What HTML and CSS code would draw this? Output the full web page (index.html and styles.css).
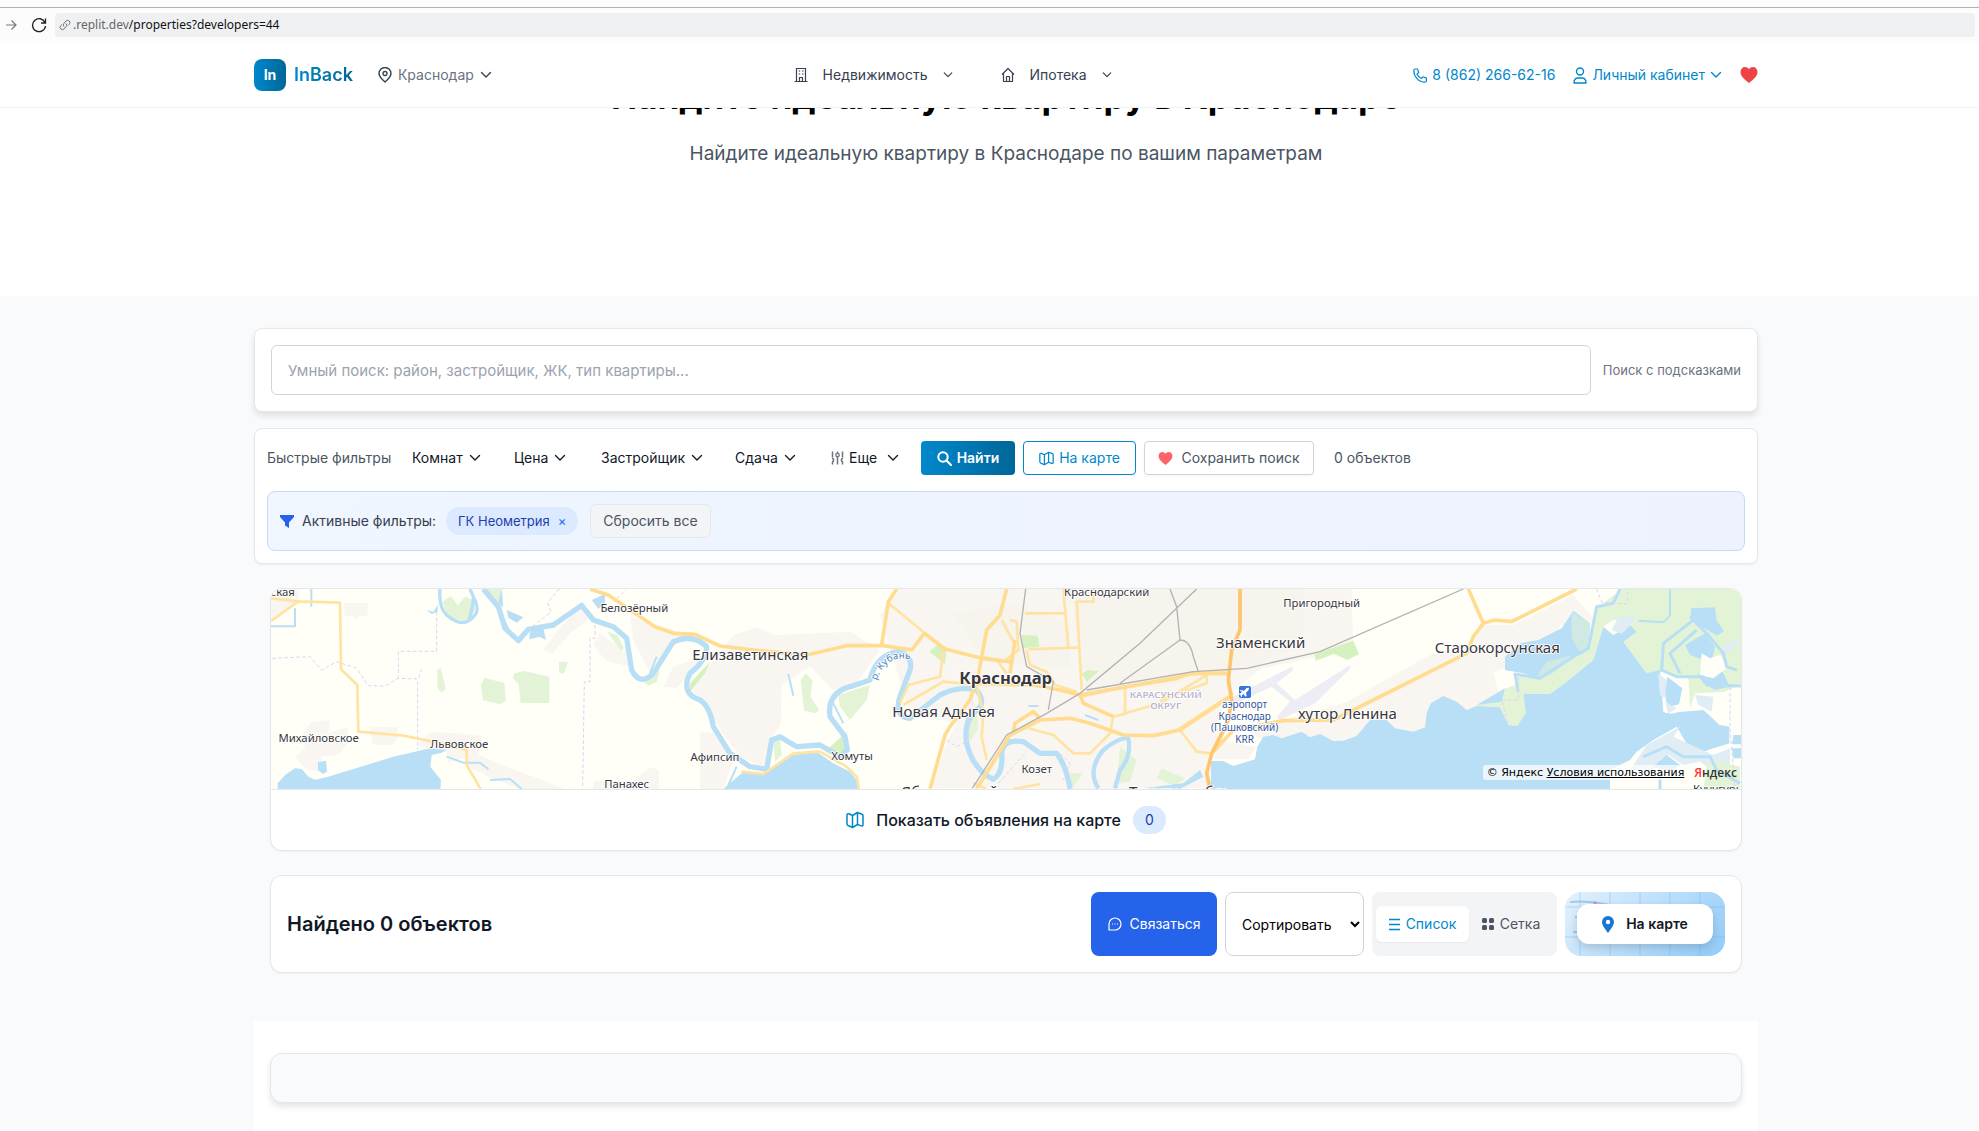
FILE: index.html
```html
<!DOCTYPE html>
<html lang="ru">
<head>
<meta charset="utf-8">
<meta name="viewport" content="width=device-width, initial-scale=1">
<title>InBack — Недвижимость в Краснодаре</title>
<link rel="stylesheet" href="styles.css">
</head>
<body>
<svg class="sprite" aria-hidden="true">
  <symbol id="chevron" viewBox="0 0 12 12"><path d="M1.5 3.5 6 8l4.5-4.5" fill="none" stroke="currentColor" stroke-width="1.4" stroke-linecap="round" stroke-linejoin="round"/></symbol>
  <symbol id="heart" viewBox="0 0 18 16"><path d="M9 16C4 12 .5 9 .5 5 .5 2 2.500 0 5 0c1.700 0 3.200.9 4 2.300C9.800.9 11.300 0 13 0c2.500 0 4.500 2 4.500 5 0 4-3.500 7-8.500 11z" fill="currentColor"/></symbol>
  <symbol id="map" viewBox="0 0 18 18"><path d="M1 4c0-1 .8-1.500 1.700-1.200L6.500 4.500 11.500 1.500l4.500 1.700c.7.300 1 .8 1 1.500v9c0 1-.8 1.500-1.700 1.200L11.500 13.500 6.500 16.500 2 14.500c-.7-.3-1-.8-1-1.500zM6.500 4.500v12M11.500 1.500v12" fill="none" stroke="currentColor" stroke-width="1.500" stroke-linejoin="round"/></symbol>
</svg>

<div class="browser">
  <svg class="browser-icon" width="12" height="12" viewBox="0 0 12 12"><path d="M1 6h10M6.500 1.500 11 6l-4.500 4.500" fill="none" stroke="#777" stroke-width="1.200"/></svg>
  <svg class="browser-icon" width="16" height="16" viewBox="0 0 16 16"><path d="M14 5.500A6.500 6.500 0 1 0 14.500 9M14.500 1.500v4.500H10" fill="none" stroke="#222" stroke-width="1.300"/></svg>
  <div class="address">
    <svg width="12" height="12" viewBox="0 0 12 12"><path d="M5 7.500a2.300 2.300 0 0 1 0-3.200L7 2a2.300 2.300 0 0 1 3.300 3.200L9 6.500M7 4.500a2.300 2.300 0 0 1 0 3.200L5 10a2.300 2.300 0 0 1-3.300-3.200L3 5.500" fill="none" stroke="#777" stroke-width="1"/></svg>
    <span class="address-text"><span class="host">.replit.dev</span>/properties?developers=44</span>
  </div>
</div>

<header class="header">
  <div class="container">
    <div class="header-row">
      <div class="header-left">
        <a class="brand" href="#"><span class="brand-mark">In</span><span class="brand-name">InBack</span></a>
        <button class="link city" type="button">
          <svg width="14" height="16" viewBox="0 0 14 16"><path d="M7 15C3 11.500 1 9 1 6.500a6 6 0 0 1 12 0C13 9 11 11.500 7 15z" fill="none" stroke="currentColor" stroke-width="1.400"/><circle cx="7" cy="6.500" r="2" fill="none" stroke="currentColor" stroke-width="1.300"/></svg>
          Краснодар
          <svg width="12" height="12"><use href="#chevron"/></svg>
        </button>
      </div>
      <nav class="nav">
        <button class="link nav-link" type="button">
          <svg width="14" height="16" viewBox="0 0 14 16"><path d="M2.500 14.500V1.500h9v13M.5 14.500h13M5.500 14.500v-4h3v4M4.700 4h1.500M8 4h1.500M4.700 7h1.500M8 7h1.500" fill="none" stroke="currentColor" stroke-width="1.200"/></svg>
          Недвижимость
          <svg width="10" height="10"><use href="#chevron"/></svg>
        </button>
        <button class="link nav-link" type="button">
          <svg width="14" height="16" viewBox="0 0 14 16"><path d="M1 7.500 7 1.500l6 6M2.500 6.500v8h9v-8M5.500 14.500v-5h3v5" fill="none" stroke="currentColor" stroke-width="1.200" stroke-linejoin="round"/></svg>
          Ипотека
          <svg width="10" height="10"><use href="#chevron"/></svg>
        </button>
      </nav>
      <div class="header-right">
        <a class="accent" href="#">
          <svg width="14" height="15" viewBox="0 0 14 15"><path d="M2 1h2.500l1.200 3.500L4 6.200c1 2 2.300 3.300 4.300 4.300L10 8.800l3.400 1.300v2.600c0 1-.7 1.500-1.600 1.500C5.700 14 .8 8.500.8 2.600.8 1.700 1.200 1 2 1z" fill="none" stroke="currentColor" stroke-width="1.200" stroke-linejoin="round"/></svg>
          8 (862) 266-62-16
        </a>
        <button class="link accent" type="button">
          <svg width="14" height="17" viewBox="0 0 14 17"><circle cx="7" cy="4.500" r="3.500" fill="none" stroke="currentColor" stroke-width="1.400"/><path d="M1 16c0-3.500 2-5 4-5h4c2 0 4 1.500 4 5z" fill="none" stroke="currentColor" stroke-width="1.400" stroke-linejoin="round"/></svg>
          Личный кабинет
          <svg width="12" height="12"><use href="#chevron"/></svg>
        </button>
        <a class="favorite" href="#" aria-label="Избранное"><svg width="18" height="16"><use href="#heart"/></svg></a>
      </div>
    </div>
  </div>
</header>

<section class="hero">
  <div class="container">
    <h1>Найдите идеальную квартиру в Краснодаре</h1>
    <p>Найдите идеальную квартиру в Краснодаре по вашим параметрам</p>
  </div>
</section>

<main class="container main">
  <section class="card search">
    <input class="search-input" type="search" aria-label="Умный поиск" placeholder="Умный поиск: район, застройщик, ЖК, тип квартиры...">
    <span class="search-note">Поиск с подсказками</span>
  </section>

  <section class="card filters">
    <div class="filter-row">
      <span class="filter-title">Быстрые фильтры</span>
      <button class="drop rooms" type="button">Комнат <svg width="12" height="12"><use href="#chevron"/></svg></button>
      <button class="drop price" type="button">Цена <svg width="12" height="12"><use href="#chevron"/></svg></button>
      <button class="drop builder" type="button">Застройщик <svg width="12" height="12"><use href="#chevron"/></svg></button>
      <button class="drop term" type="button">Сдача <svg width="12" height="12"><use href="#chevron"/></svg></button>
      <button class="drop more" type="button">
        <svg width="13" height="14" viewBox="0 0 13 14"><path d="M1.500.5v6M1 7.500c2 0 2.500 3 0 3.500M1.500 11v2.500M6.500.5V2M6.500 6v7.500M11.500.5v6M12 7.500c-2 0-2.500 3 0 3.500M11.500 11v2.500" fill="none" stroke="#6b7280" stroke-width="1.500"/><circle cx="6.500" cy="4" r="1.700" fill="none" stroke="#6b7280" stroke-width="1.300"/></svg>
        Еще <svg class="more-chev" width="12" height="12"><use href="#chevron"/></svg>
      </button>
      <button class="btn btn-find" type="button"><svg width="15" height="15" viewBox="0 0 15 15"><circle cx="6" cy="6" r="4.700" fill="none" stroke="#fff" stroke-width="2"/><path d="m9.500 9.500 4.500 4.500" stroke="#fff" stroke-width="2.200" stroke-linecap="round"/></svg>Найти</button>
      <button class="btn btn-map" type="button"><svg width="15" height="15"><use href="#map"/></svg>На карте</button>
      <button class="btn btn-save" type="button"><svg width="15" height="13"><use href="#heart"/></svg>Сохранить поиск</button>
      <span class="count">0 объектов</span>
    </div>
    <div class="active">
      <svg width="14" height="13" viewBox="0 0 14 13"><path d="M0 0h14v2L9 7.500V13L5 10.500v-3L0 2z" fill="#2563eb"/></svg>
      <span class="active-title">Активные фильтры:</span>
      <span class="chip">ГК Неометрия <button type="button" aria-label="Убрать фильтр">×</button></span>
      <button class="reset" type="button">Сбросить все</button>
    </div>
  </section>

  <section class="card map-card">
    <div class="map">
      <svg class="map-canvas" viewBox="33 57 4410 600" preserveAspectRatio="xMidYMid slice" role="img" aria-label="Карта Краснодара">
        <rect x="33" y="57" width="4410" height="600" fill="#fffff8"/>
        <!-- built-up areas -->
        <g fill="#f9f6f1">
          <path d="M33 57H118V85L60 140 33 155zM253 98h70v40h-28l-5 12-15-12h-22zM155 455l55-5-5 40 60-20v45l-30 40-50 5-10 45-40-10-30-35 30-25-10-40zM330 472h83v30l-15 22h-60zM512 487l80 2 75 10-10 55 90 40 85 30 80 33H780l-100-40-60-30v-25l-55 15-5-30-90-20z"/>
          <path d="M965 103 985 150 935 185 875 252 850 240 890 185zM1020 190l80 60 5 40-70-20-35-45zM1110 140l180 55-60 40-60 75-50-100zM1210 350l30-60 90-30-30 40-50 55zM1320 487h40l60 80-20 60-10 30h-70zM1000 632h120l50-40 27 8v57h-197z"/>
          <path d="M1350 285 1420 195 1490 172 1545 195 1770 185 1860 240 1790 340 1720 360 1650 290 1565 345 1562 465 1530 510 1515 595 1440 560 1380 480 1330 390 1280 350z"/>
          <path d="M1910 57H3275l5 180-280 60-110 90-20 120 120 25-25 35H2853v90H2015l45-140 30-60-140-20-50-170-40-130zM2940 470l190-35 130-40 250-140 130-40 30-50 90 0 180-90 70 80-110 10-30 90-170 50 15 60-105 95-100-5-40 45-190 30-80-10-140 20z"/>
        </g>
        <path d="M2430 57h700v170l-230 90-420 60zM2080 130l170-30 180 60v130l-250-10z" fill="#f6f2eb" opacity=".4"/>
        <!-- parks -->
        <g fill="#e3f4d6">
          <path d="M547 95l25-17 22 28 22-27 25 14 5 30-30 30-50-8zM665 57h60v60l-20-20zM532 298l10-4 15 62-12 12-13-15zM663 345l10-21 60 14 5 55-17 10-52-12zM758 325l5-15 30-7 75 17v79h-86l-6-56zM897 275h27l-12 36-15-3zM1042 185l30 10 20 40-10 8zM1150 335l50-35-10 35-25 12z"/>
          <path d="M1622 330l15-20 20 20-5 50 25 40-10 10-35-8zM1735 375l95-30-10 45-50 60-30-40zM1540 510l20-5 5 50-20 20zM2115 440l35-25 5 60-25 40zM2430 610l40-2-35 49zM2580 530l50 40-20 65-40 5zM2690 625l15-30 70 30-30 22z"/>
          <path d="M4085 57H4443V345L4330 390 4290 415 4275 365 4200 310 4160 310 4090 215 4120 150 4060 150 4030 170 4000 270 3920 335 3870 372 3790 372 3797 430 3772 467 3745 465 3720 412 3645 408 3720 380 3725 360 3765 345 3775 310 3840 325 3940 265 3985 235 4005 120z"/>
        </g>
        <path d="M1290 340 1350 275 1335 310 1290 365zM2008 245l30-25 22 20-5 42zM2285 195l48 2 5 33-50 5zM2465 312l18-12 33 3-35 33zM1700 540l60-55 5 60-40 5zM3165 252l115-40 17 40-35 18-40-18-55 20z" fill="#d5f1c0"/>
        <!-- airport field -->
        <path d="M2880 400 3095 290 3100 300 3050 340 3105 390 3270 285 3272 295 3165 400 3060 450 3050 440 3090 395 3035 350 2930 400z" fill="#eeecf4"/>
        <!-- reservoirs -->
        <g fill="#b8dff6">
          <path d="M53 657v-17l22-25 30-20 20 2 20 23 20 9 35-7 200-62 110-25 50 5-15 8-30 7-4 35 32 40-2 27zM174 577l24-5 3 33-13 7-14-12z"/>
          <path d="M1390 657 1450 605 1510 612 1560 580 1600 555 1670 545 1720 580 1770 605 1790 630 1797 657z"/>
          <path d="M2853 573 2890 573 2920 588 2985 568 2992 530 3010 500 3040 495 3065 505 3125 485 3150 502 3180 492 3220 513 3250 512 3290 498 3330 450 3380 450 3405 475 3460 485 3495 472 3500 430 3512 400 3550 378 3590 395 3620 420 3650 408 3720 412 3745 465 3772 467 3797 430 3790 372 3870 372 3920 335 4000 270 4030 170 4060 195 4110 165 4130 185 4090 215 4160 310 4200 300 4215 330 4215 430 4330 420 4380 465 4410 470 4410 520 4360 535 4300 555 4250 470 4180 510 4130 545 4110 570 4050 600 4050 657H2853z"/>
          <path d="M3735 300V260L3780 220 3835 210 3905 175 3940 122 3990 160 3985 230 3940 265 3840 325 3790 310zM2650 655 2770 640 2820 600 2830 620 2760 657zM3650 405l85-50-10 40zM995 90l40-18v25l-20 20zM500 120l20 5 13-20v20l-18 7zM740 120l50 22-20 16-25-15zM810 185l40-10 8 35-20-10-30 8zM725 57l5 55-15-15z"/>
          <path d="M4293 115l72-3 5 40 22 30-20 15-45-25-35-30zM4335 190l30 40-15 60-20-20-40-15-15-30zM4220 310l45 45-5 40-35 5zM4310 310l30 10 40-30 30 60-45 10-35-20zM4420 495h25v30h-30zM4420 535h25v30h-25z"/>
        </g>
        <path d="M3935 125l55 35-5 70-20 25-30-50zM3830 320l30-45 100-25-20 15-70 50z" fill="#d0eae3"/>
        <!-- marshes and sandbanks -->
        <path d="M4200 305 4285 325 4290 415 4235 432 4210 425z" fill="#fffff8"/>
        <path d="M4222 320l45 35-10 48-35 8-8-45z" fill="#b8dff6"/>
        <path d="M4325 250l25 15 30-10 25 35-45 35-40-10zM4290 415l15-45 105-5 33-10v302h-45l10-130v-60l-30-2-48-50z" fill="#fffff8"/>
        <path d="M4055 180l20-38 45-5 5 15-40 40zM4195 310l25 20-5 55-15-10zM4385 235l45-30 10 10-40 40zM4110 600l50-75 100-55-20 30 120 55 50-20v80l-60 30-170-10zM4215 395l35 20-25 15zM4305 375l55 5-5 45-40-20z" fill="#e0edf4"/>
        <path d="M4180 600l45-45 45 30 50-10 40 30-20 52h-260l60-30z" fill="#fffff8"/>
        <path d="M4340 590l20-20 80 20v67h-110z" fill="#e3f4d6"/>
        <path d="M4180 590l40-35 40 30-30 20zM4420 495h24v28h-28zM4416 535h28v30h-24z" fill="#b8dff6"/>
        <!-- rivers -->
        <g fill="none" stroke="#b8dff6" stroke-linejoin="round">
          <path d="M540 57Q535 110 560 135 610 180 645 135 660 120 640 80L630 57M640 80Q640 110 627 150" stroke-width="10"/>
          <path d="M670 57 715 110 735 175 775 212 805 178 880 165 965 106 1000 150 1060 170 1100 205 1115 300Q1140 350 1180 310L1240 215Q1300 190 1340 230 1340 270 1290 310 1260 370 1320 390 1350 410 1360 470L1410 550 1470 590 1520 598 1535 510 1560 500 1610 530 1680 525 1740 560 1762 540 1755 500 1710 440Q1700 370 1770 350L1830 330Q1850 250 1920 245 1960 260 1950 300L1920 380Q1900 440 1950 445L2040 375Q2100 345 2150 360 2180 400 2150 420 2110 450 2120 520 2140 600 2200 628 2230 610 2225 550 2230 505 2290 515L2340 550 2390 550Q2420 590 2430 657" stroke-width="16"/>
          <path d="M2515 655Q2480 600 2530 540 2580 500 2605 505 2615 560 2580 600L2565 655" stroke-width="13"/>
          <path d="M1720 400l30 60M1585 312l15 65M2475 435l40 15M2305 408h30M560 560l50 18 50 0 25 20M690 630l60-3 35 30M715 110l35 80M1170 310l20-50M1430 590l-30 67M105 115v54H33M154 57v53M4230 57v80l-20 20-75-5" stroke-width="6"/>
          <path d="M3775 365 3765 312 3840 325 3940 260 3985 235 4010 110 4060 100 4080 57M4300 150 4210 220 4205 300 4250 320 4330 320 4340 345 4443 348M4290 140 4340 190 4390 250 4400 290 4430 300M4310 180 4230 250 4260 310M4150 560 4220 530 4270 560 4350 560 4370 600 4440 640M4200 600v57" stroke-width="9"/>
        </g>
        <!-- district borders -->
        <path d="M37 265 150 260 185 300 230 275 290 295 325 347 375 348 415 325 475 327 485 297M530 125V244H415V325M473 335V540M898 57l-35 40 10 30-60 45M1005 165v40h-15v130h-17l-5 322M1070 85l30-28M2060 510l30 20 30-15 20-130M2215 640l85-95M2400 550l30 30-20 50M4010 57l15 40 75 5 5-45M3775 320v70h-50l20 75M4410 350v130l15 177" fill="none" stroke="#dcd4f1" stroke-width="3" stroke-dasharray="11 7"/>
        <!-- local roads -->
        <g fill="none" stroke="#ffe3a3" stroke-width="8" stroke-linejoin="round">
          <path d="M33 85 115 94 240 98 243 298 292 345 295 485 430 497 530 517 620 540V585L662 657M33 153 115 94M1445 605 1510 612 1600 550 1680 545 1760 590 1790 620 1797 657"/>
          <path d="M1880 95 2050 235M2050 238 2040 320 1945 345 1920 400M1930 405 2050 335 2150 345 2170 430 2165 500 2180 570M2295 130H2415M2410 57 2425 235M2500 57V95H2450L2465 360M2305 238 2460 232M2250 150 2270 155 2275 240 2230 275 2165 260M2225 150 2260 215M2210 270 2240 310M2300 240 2310 285 2360 305 2385 345 2450 365M2465 380 2600 350 2750 320 2900 300M2470 400 2560 440 2600 430M2595 345V430L2700 400 2840 315V340L2700 390M2305 475 2380 495 2440 550 2490 550 2560 480M2560 440 2550 485M2760 480 2810 545 2850 550M2900 470 2860 545M2750 480 2920 370M2140 640l40 17M2260 657l80-15"/>
        </g>
        <g fill="none" stroke="#ffdc8f" stroke-width="11" stroke-linejoin="round">
          <path d="M990 57 1045 75 1185 170 1240 190 1305 193 1380 228 1480 240 1560 248 1640 255 1760 227 1865 226 1955 240 1993 190M1865 226 1885 95 1910 57M1993 190 2055 237 2165 265 2250 275M2240 57 2220 135 2180 180 2155 315 2130 390 2070 470 2055 495 2010 657M2150 340 2320 345 2400 360 2460 375 2600 350 2750 325 2790 310 2900 310M2460 375 2470 400 2560 440M2250 495 2340 450 2430 445 2490 460 2590 495 2680 497 2760 480 2910 380M2260 490 2265 460 2320 425 2340 445M2265 210 2250 310M2250 495 2150 657"/>
          <path d="M2860 545 2920 480 3070 452 3220 450 3400 360 3620 250 3640 200 3670 160 3705 150 3755 155 3950 57M3625 57 3670 160"/>
        </g>
        <path d="M2940 57V180L2915 240 2905 330 2915 390 2905 450 2855 550 2840 610 2850 657" fill="none" stroke="#ffc56c" stroke-width="11"/>
        <path d="M2137 655 2240 495 2360 430 2460 370 2640 220 2810 57M2297 57 2280 190 2300 290 2380 335 2365 420M2730 57 2750 110 2760 210 2580 340M2760 210Q2790 210 2800 260L2815 305M2480 360 2800 305 2960 295 3180 245 3610 57" fill="none" stroke="#b3b3b3" stroke-width="4"/>
        <rect x="2937" y="348" width="36" height="36" rx="5" fill="#3975df"/>
        <path d="m2942 360 10 2 8-8 7-1-1 7-8 8 2 10-4 2-5-8-5 4 0 5-3-1-2-5-5-2 0-2 6-1 4-5-7-3z" fill="#fff"/>
        <!-- place names -->
        <g class="places" text-anchor="middle">
          <g class="town-small">
            <text x="68" y="79">ская</text><text x="1123" y="127">Белозёрный</text><text x="176" y="516">Михайловское</text><text x="598" y="535">Львовское</text><text x="1100" y="654">Панахес</text><text x="1365" y="573">Афипсип</text><text x="1776" y="571">Хомуты</text><text x="2330" y="609">Козет</text><text x="2540" y="79">Краснодарский</text><text x="3185" y="111">Пригородный</text><text x="4376" y="669">Кучугуры</text>
          </g>
          <g class="town">
            <text x="1471" y="269">Елизаветинская</text><text x="2051" y="440">Новая Адыгея</text><text x="3002" y="234">Знаменский</text><text x="3262" y="446">хутор Ленина</text><text x="3712" y="249">Старокорсунская</text><text x="2070" y="682">Яблоновский</text><text x="2760" y="682">Тлюстенхабль</text>
          </g>
          <text class="capital" x="2237" y="341">Краснодар</text>
          <g class="district"><text x="2717" y="384">КАРАСУНСКИЙ</text><text x="2717" y="416">ОКРУГ</text></g>
          <g class="airport"><text x="2954" y="415">аэропорт</text><text x="2954" y="449">Краснодар</text><text x="2954" y="483">(Пашковский)</text><text x="2954" y="518">KRR</text></g>
          <path id="kuban" d="M1850 332Q1880 245 1962 272" fill="none" stroke="none"/>
          <text class="river" text-anchor="start"><textPath href="#kuban">р. Кубань</textPath></text>
        </g>
      </svg>
      <div class="map-legal"><span class="map-copy">© Яндекс <a href="#">Условия использования</a></span><a class="map-logo" href="#"><span>Я</span>ндекс</a></div>
    </div>
    <button class="map-show" type="button"><svg width="18" height="18"><use href="#map"/></svg>Показать объявления на карте<span class="badge">0</span></button>
  </section>

  <section class="card results">
    <h2>Найдено 0 объектов</h2>
    <div class="actions">
      <button class="contact" type="button"><svg width="14" height="14" viewBox="0 0 14 14"><path d="M1 13V7a6 6 0 1 1 6 6z" fill="none" stroke="#fff" stroke-width="1.200" stroke-linejoin="round"/><path d="M4 7h1M6.500 7h1M9 7h1" stroke="#fff" stroke-width="1.200"/></svg>Связаться</button>
      <select class="sort" aria-label="Сортировать"><option>Сортировать</option></select>
      <div class="views">
        <button class="view view-on" type="button"><svg width="11" height="13" viewBox="0 0 11 13"><path d="M0 1.500h11M0 6.500h11M0 11.500h11" stroke="currentColor" stroke-width="1.500"/></svg>Список</button>
        <button class="view" type="button"><svg width="12" height="12" viewBox="0 0 12 12"><g fill="currentColor"><rect width="5" height="5" rx="1.500"/><rect x="7" width="5" height="5" rx="1.500"/><rect y="7" width="5" height="5" rx="1.500"/><rect x="7" y="7" width="5" height="5" rx="1.500"/></g></svg>Сетка</button>
      </div>
      <button class="tomap" type="button">
        <svg class="tomap-bg" viewBox="0 0 160 64" preserveAspectRatio="none" aria-hidden="true"><path d="M15 0v64M45 0v64M75 0v64M105 0v64M135 0v64M0 15h160M0 45h160" stroke="#6fb3ec" stroke-opacity=".2" stroke-width="2"/><path d="M5 10q20-2 40 3M10 25h10M8 40h10" stroke="#5a8fd0" stroke-opacity=".4" stroke-width="2" fill="none"/><circle cx="30" cy="11" r="1.500" fill="#e05299" opacity=".6"/></svg>
        <span class="tomap-label"><svg width="12" height="17" viewBox="0 0 12 17"><path d="M6 17C3 12.500 0 9.500 0 6a6 6 0 0 1 12 0c0 3.500-3 6.500-6 11z" fill="#1976d2"/><circle cx="6" cy="6" r="2.200" fill="#fff"/></svg>На карте</span>
      </button>
    </div>
  </section>

  <section class="listing"><div class="card listing-card"></div></section>
</main>
</body>
</html>
```
FILE: styles.css
```css
* { box-sizing: border-box; }
body {
  margin: 0;
  background: #f9fafc;
  color: #111827;
  font-family: Inter, "Open Sans", sans-serif;
  font-size: 14px;
  line-height: 20px;
  overflow-x: hidden;
}
button, input, select { font: inherit; color: inherit; }
button { background: none; border: 0; padding: 0; cursor: pointer; white-space: nowrap; }
a { color: inherit; text-decoration: none; }
svg { flex: none; }
.sprite { position: absolute; width: 0; height: 0; }

.browser {
  display: flex;
  align-items: center;
  height: 43px;
  padding: 8px 4px 2px 5px;
  background: linear-gradient(#fcfcfc 7px, #b0b0b0 7px, #b0b0b0 8px, #fcfcfc 8px);
}
.browser-icon { margin-right: 14px; }
.browser-icon + .browser-icon { margin-right: 8px; }
.address {
  display: flex;
  flex: 1;
  align-items: center;
  gap: 2px;
  height: 24px;
  padding-left: 4px;
  border-radius: 4px;
  background: #eff0f2;
  font: 12px/24px "Noto Sans", sans-serif;
  color: #111;
}
.host { color: #666; }

.container { width: 100%; max-width: 1537px; padding-left: 33px; margin: 0 auto; }
.header { position: relative; z-index: 1; background: #fff; border-bottom: 1px solid #f1f3f5; }
.header-row { display: flex; align-items: center; justify-content: space-between; height: 64px; }
.header-left, .header-right, .nav, .brand, .link, .accent { display: flex; align-items: center; }
.header-left { gap: 25px; }
.brand { gap: 8px; }
.brand-mark {
  width: 32px;
  height: 32px;
  border-radius: 8px;
  background: linear-gradient(90deg, #0088cc, #006699);
  color: #fff;
  font-weight: 700;
  line-height: 32px;
  text-align: center;
}
.brand-name {
  background: linear-gradient(90deg, #0088cc, #006699);
  background-clip: text;
  color: transparent;
  font-size: 18px;
  font-weight: 600;
  line-height: 28px;
}
.link { gap: 8px; }
.city { gap: 6px; color: #6b7280; }
.city svg, .nav-link svg { color: #374151; }
.nav { gap: 48px; color: #374151; }
.nav-link { gap: 15px; }
.header-right { gap: 18px; }
.accent { gap: 5px; color: #0088cc; white-space: nowrap; }
.favorite { color: #ef4444; line-height: 0; }

.hero { height: 188px; overflow: hidden; background: #fff; text-align: center; }
.hero h1 { margin: -32px 0 24px; color: #000; font-size: 35px; font-weight: 700; line-height: 40px; }
.hero p { margin: 0; color: #4b5563; font-size: 19px; line-height: 28px; }

.main { display: flex; flex-direction: column; padding-top: 32px; }
.card { border: 1px solid #e5e7eb; border-radius: 8px; background: #fff; box-shadow: 0 1px 2px rgba(0, 0, 0, .05); }
.search {
  display: flex;
  align-items: center;
  gap: 12px;
  padding: 16px;
  margin-bottom: 16px;
  box-shadow: 0 4px 6px rgba(0, 0, 0, .1);
}
.search-input {
  flex: 1;
  min-width: 0;
  height: 50px;
  padding: 0 16px;
  border: 1px solid #d1d5db;
  border-radius: 6px;
  background: #fff;
  font-size: 15px;
}
.search-input::placeholder { color: #9ca3af; opacity: 1; }
.search-note { color: #6b7280; font-size: 13px; }

.filters { padding: 12px; margin-bottom: 24px; }
.filter-row { display: flex; align-items: center; margin-bottom: 16px; }
.filter-title { width: 145px; color: #4b5563; white-space: nowrap; }
.drop { display: flex; align-items: center; gap: 6px; color: #111827; }
.rooms { width: 102px; }
.price { width: 87px; }
.builder { width: 134px; }
.term { width: 96px; }
.more { gap: 5px; width: 90px; }
.more-chev { margin-left: 5px; }
.btn { display: flex; align-items: center; justify-content: center; gap: 5px; height: 34px; margin-right: 8px; border-radius: 4px; }
.btn-find { width: 94px; background: linear-gradient(90deg, #0088cc, #006699); color: #fff; font-weight: 600; }
.btn-map { width: 113px; border: 1px solid #0088cc; color: #0088cc; }
.btn-save { gap: 8px; width: 170px; border: 1px solid #d1d5db; color: #4b5563; box-shadow: 0 1px 2px rgba(0, 0, 0, .05); }
.btn-save svg { color: #ff6268; }
.count { margin-left: 12px; color: #4b5563; }
.active {
  display: flex;
  align-items: center;
  height: 60px;
  padding: 0 12px;
  border: 1px solid #bfdbfe;
  border-radius: 8px;
  background: linear-gradient(90deg, #eff6ff, #eef2ff);
}
.active-title { margin: 0 10px 0 8px; color: #374151; }
.chip { display: flex; gap: 8px; padding: 4px 12px; border-radius: 14px; background: #dbeafe; color: #1e40af; font-size: 13px; }
.chip button { color: #2563eb; }
.reset { height: 34px; padding: 0 12px; margin-left: 12px; border: 1px solid #e5e7eb; border-radius: 6px; background: #f3f4f6; color: #4b5563; }

.map-card { margin: 0 16px 24px; border-radius: 12px; overflow: hidden; }
.map { position: relative; height: 201px; border-bottom: 1px solid #e5e7eb; }
.map-canvas { display: block; width: 100%; height: 200px; }
.places { fill: #38383e; font-family: "Noto Sans", sans-serif; paint-order: stroke; stroke: #fff; stroke-width: 5px; stroke-linejoin: round; }
.town-small { font-size: 34px; }
.town { font-size: 45px; }
.capital { font-size: 50px; font-weight: 700; }
.district { font-size: 29px; font-weight: 600; fill: #b9b5cd; }
.airport { font-size: 30px; fill: #3157a3; }
.river { font-size: 29px; fill: #4a7dbd; }
.map-legal { position: absolute; right: 4px; bottom: 9px; display: flex; align-items: center; gap: 9px; }
.map-copy { padding: 0 1px 0 4px; border-radius: 3px; background: rgba(255, 255, 255, .7); color: #000; font: 11px/15px "DejaVu Sans", sans-serif; }
.map-copy a { text-decoration: underline; }
.map-logo { color: #333; font: 600 12px/15px "Open Sans", sans-serif; }
.map-logo span { color: #f33; }
.map-show { display: flex; align-items: center; justify-content: center; gap: 12px; width: 100%; height: 60px; font-size: 16px; font-weight: 500; }
.map-show svg { color: #0088cc; }
.badge { padding: 4px 12px; border-radius: 14px; background: #dbeafe; color: #1e40af; font-size: 14px; font-weight: 400; }

.results { display: flex; align-items: center; justify-content: space-between; padding: 16px; margin: 0 16px 48px; border-radius: 12px; }
.results h2 { margin: 0; font-size: 20px; font-weight: 600; line-height: 28px; }
.actions { display: flex; gap: 8px; height: 64px; }
.contact { display: flex; align-items: center; justify-content: center; gap: 8px; width: 126px; border-radius: 8px; background: #2563eb; color: #fff; }
.sort { width: 139px; padding: 0 0 0 12px; border: 1px solid #d1d5db; border-radius: 8px; background: #fff; color: #000; }
.views { display: flex; align-items: center; width: 185px; padding: 4px; border-radius: 8px; background: #f3f4f6; }
.view { display: flex; flex: 1; align-items: center; justify-content: center; gap: 6px; height: 36px; border-radius: 6px; color: #4b5563; }
.view-on { flex: none; width: 93px; background: #fff; color: #0088cc; box-shadow: 0 1px 2px rgba(0, 0, 0, .05); }
.tomap { position: relative; width: 160px; padding: 12px; border-radius: 16px; overflow: hidden; background: linear-gradient(135deg, #e3f2fd, #90caf9); }
.tomap-bg { position: absolute; inset: 0; width: 100%; height: 100%; }
.tomap-label { position: relative; display: flex; align-items: center; justify-content: center; gap: 12px; height: 40px; border-radius: 12px; background: #fff; box-shadow: 0 4px 8px rgba(0, 0, 0, .15); font-weight: 600; }

.listing { padding: 32px 16px 28px; background: #fff; }
.listing-card { height: 50px; border-radius: 12px; background: #f9fafc; box-shadow: 0 4px 6px rgba(0, 0, 0, .1); }
```
